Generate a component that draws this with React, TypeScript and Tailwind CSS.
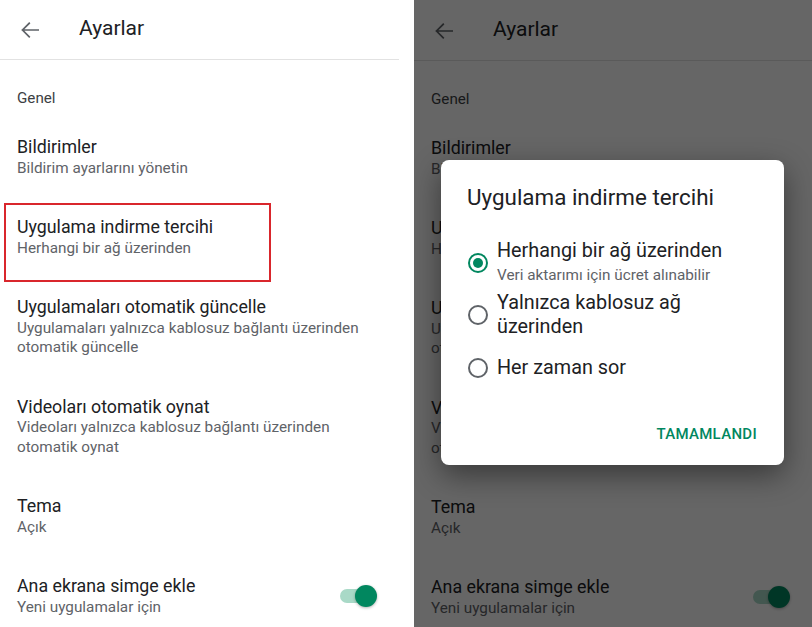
import React from "react";

const items = [
  { title: "Bildirimler", sub: ["Bildirim ayarlarını yönetin"] },
  { title: "Uygulama indirme tercihi", sub: ["Herhangi bir ağ üzerinden"] },
  {
    title: "Uygulamaları otomatik güncelle",
    sub: ["Uygulamaları yalnızca kablosuz bağlantı üzerinden", "otomatik güncelle"],
  },
  {
    title: "Videoları otomatik oynat",
    sub: ["Videoları yalnızca kablosuz bağlantı üzerinden", "otomatik oynat"],
  },
  { title: "Tema", sub: ["Açık"] },
];

function BackArrow() {
  return (
    <svg width="18" height="16" viewBox="0 0 18 16" fill="none" className="shrink-0">
      <path d="M17.5 8H1.5M8.2 1.3L1.5 8l6.7 6.7" stroke="#5f6368" strokeWidth="1.7" strokeLinecap="square" />
    </svg>
  );
}

function Toggle() {
  return (
    <div className="relative w-[37px] h-[22px] shrink-0">
      <div className="absolute left-0 top-[4px] w-[32px] h-[14px] rounded-full bg-[#a9d9c7]" />
      <div className="absolute right-0 top-0 w-[22px] h-[22px] rounded-full bg-[#01875f] shadow-[0_1px_3px_rgba(0,0,0,0.3)]" />
    </div>
  );
}

function SettingsPage() {
  return (
    <div className="flex flex-col w-full">
      <div className="flex items-center h-[60px] pl-[21px] border-b border-[#e2e2e2]">
        <BackArrow />
        <span className="ml-[40px] mb-[4px] text-[21px] leading-[28px] text-[#202124]">Ayarlar</span>
      </div>
      <div className="pt-[28px] pb-[9px] px-[17px] text-[15.2px] leading-[20px] text-[#3c4043]">Genel</div>
      {items.map((it) => (
        <div key={it.title} className="px-[17px] py-[19px]">
          <div className="text-[17.8px] leading-[22.5px] text-[#202124]">{it.title}</div>
          {it.sub.map((s) => (
            <div key={s} className="text-[15.3px] leading-[19.5px] text-[#5f6368]">
              {s}
            </div>
          ))}
        </div>
      ))}
      <div className="flex items-center justify-between pl-[17px] pr-[22px] py-[19px]">
        <div>
          <div className="text-[17.8px] leading-[22.5px] text-[#202124]">Ana ekrana simge ekle</div>
          <div className="text-[15.3px] leading-[19.5px] text-[#5f6368]">Yeni uygulamalar için</div>
        </div>
        <Toggle />
      </div>
    </div>
  );
}

function Radio({ checked }: { checked?: boolean }) {
  return (
    <svg width="20" height="20" viewBox="0 0 20 20" className="shrink-0">
      <circle cx="10" cy="10" r="9" fill="none" stroke={checked ? "#01875f" : "#5f6368"} strokeWidth="2" />
      {checked && <circle cx="10" cy="10" r="5" fill="#01875f" />}
    </svg>
  );
}

export default function App() {
  return (
    <div
      className="w-[812px] h-[627px] overflow-hidden bg-white flex"
      style={{ fontFamily: "Roboto, 'Noto Sans', sans-serif" }}
    >
      <div className="relative w-[399px] shrink-0 bg-white">
        <SettingsPage />
        <div className="absolute left-[4px] top-[203px] w-[267px] h-[79px] border-2 border-[#d9262c]" />
      </div>
      <div className="w-[15px] shrink-0 bg-white" />
      <div className="relative w-[398px] shrink-0 bg-white pt-px overflow-hidden">
        <SettingsPage />
        <div className="absolute inset-0 bg-black/60" />
        <div className="absolute left-[27px] top-[160px] w-[343px] h-[305px] bg-white rounded-[8px] shadow-[0_10px_30px_rgba(0,0,0,0.45)] flex flex-col pt-[23px]">
          <div className="pl-[26px] text-[22.4px] leading-[28px] text-[#202124]">Uygulama indirme tercihi</div>
          <div className="mt-[28px] flex items-center pl-[27px]">
            <Radio checked />
            <div className="ml-[9px]">
              <div className="text-[19.8px] leading-[24px] text-[#202124]">Herhangi bir ağ üzerinden</div>
              <div className="mt-[1px] text-[15.3px] leading-[22px] text-[#5f6368]">Veri aktarımı için ücret alınabilir</div>
            </div>
          </div>
          <div className="mt-[5px] flex items-center pl-[27px]">
            <Radio />
            <div className="ml-[9px] text-[19.8px] leading-[24px] text-[#202124]">
              <div>Yalnızca kablosuz ağ</div>
              <div>üzerinden</div>
            </div>
          </div>
          <div className="mt-[17px] flex items-center pl-[27px]">
            <Radio />
            <div className="ml-[9px] text-[19.8px] leading-[24px] text-[#202124]">Her zaman sor</div>
          </div>
          <div className="mt-[44px] flex justify-end pr-[27px]">
            <span className="text-[15px] leading-[20px] font-medium tracking-[0.3px] text-[#01875f]">TAMAMLANDI</span>
          </div>
        </div>
      </div>
    </div>
  );
}
